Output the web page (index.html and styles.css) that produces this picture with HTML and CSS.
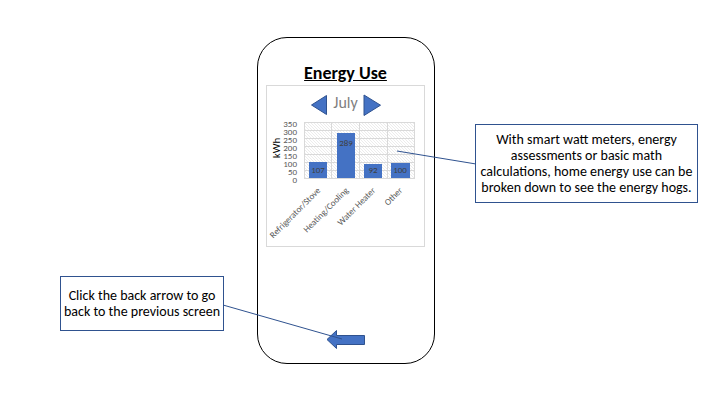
FILE: index.html
```html
<!DOCTYPE html>
<html lang="en">
<head>
<meta charset="utf-8">
<title>Energy Use</title>
<link rel="stylesheet" href="styles.css">
</head>
<body>
<main class="board">
  <aside class="callout callout-back">
    <p>Click the back arrow to go<br>back to the previous screen</p>
    <svg class="link link-back" viewBox="0 0 120 36" aria-hidden="true"><path d="M0 1L119 35"/></svg>
  </aside>

  <section class="phone">
    <h1 class="title">Energy Use</h1>
    <div class="card">
      <div class="month">
        <button class="step" type="button" aria-label="Previous month">
          <svg width="18" height="22" viewBox="0 0 18 22"><path d="M1.5 11L16.5 1.5V20.5Z"/></svg>
        </button>
        <h2 class="name">July</h2>
        <button class="step" type="button" aria-label="Next month">
          <svg width="18" height="22" viewBox="0 0 18 22"><path d="M1 1V21.500L17.500 11.200Z"/></svg>
        </button>
      </div>
      <svg class="chart" viewBox="0 0 157 128" role="img" aria-label="Energy use in kWh by appliance">
        <defs>
          <pattern id="hatch" width="3" height="3" patternUnits="userSpaceOnUse">
            <path class="hatch" d="M-1 -1L4 4M-1 2L1 4M2 -1L4 1"/>
          </pattern>
        </defs>
        <rect x="37" y="4" width="111" height="56" fill="url(#hatch)"/>
        <path class="grid" d="M37 4.500H148M37 12.500H148M37 20.500H148M37 28.500H148M37 36.500H148M37 44.500H148M37 52.500H148M37 60.500H148M37.500 4V61M64.500 4V61M92.500 4V61M120.500 4V61M147.500 4V61"/>
        <g class="bars">
          <rect x="42" y="44" width="18" height="16"/>
          <rect x="70" y="15" width="18" height="45"/>
          <rect x="97" y="46" width="18" height="14"/>
          <rect x="124" y="45" width="19" height="15"/>
        </g>
        <g class="values">
          <text x="51" y="55">107</text>
          <text x="79" y="28">289</text>
          <text x="106" y="55">92</text>
          <text x="133" y="55">100</text>
        </g>
        <g class="ticks">
          <text x="30" y="9">350</text>
          <text x="30" y="17">300</text>
          <text x="30" y="25">250</text>
          <text x="30" y="33">200</text>
          <text x="30" y="41">150</text>
          <text x="30" y="49">100</text>
          <text x="30" y="57">50</text>
          <text x="30" y="65">0</text>
        </g>
        <text class="unit" transform="translate(13 30) rotate(-90)">kWh</text>
        <g class="names">
          <text transform="translate(54 73) rotate(-45)">Refrigerator/Stove</text>
          <text transform="translate(82 73) rotate(-45)">Heating/Cooling</text>
          <text transform="translate(109 73) rotate(-45)">Water Heater</text>
          <text transform="translate(136 73) rotate(-45)">Other</text>
        </g>
      </svg>
    </div>
    <button class="back" type="button" aria-label="Back">
      <svg width="40" height="22" viewBox="0 0 40 22"><path d="M1 10.500L10.500 1.500V6.500H38.500V15.500H10.500V19.500Z"/></svg>
    </button>
  </section>

  <aside class="callout callout-info">
    <p>With smart watt meters, energy<br>assessments or basic math<br>calculations, home energy use can be<br>broken down to see the energy hogs.</p>
    <svg class="link link-info" viewBox="0 0 80 16" aria-hidden="true"><path d="M1 1L80 14"/></svg>
  </aside>
</main>
</body>
</html>
```
FILE: styles.css
```css
* {
  box-sizing: border-box;
}

body {
  margin: 0;
  background: #fff;
  color: #000;
  font-family: Carlito, Lato, "Open Sans", sans-serif;
}

h1,
h2,
p {
  margin: 0;
}

button {
  display: block;
  padding: 0;
  border: 0;
  background: none;
}

button svg {
  display: block;
  fill: #4472c4;
  stroke: #2f528f;
}

.board {
  display: grid;
  grid-template-columns: 164fr 33fr 178fr 40fr 223fr;
  align-items: start;
  padding: 37px 22px 41px 60px;
}

.callout {
  position: relative;
  display: flex;
  align-items: center;
  justify-content: center;
  border: 1px solid #2f528f;
  background: #fff;
  font-size: 14px;
  line-height: 16px;
  text-align: center;
  white-space: nowrap;
}

.callout-back {
  grid-column: 1;
  min-height: 55px;
  margin-top: 239px;
}

.callout-info {
  grid-column: 5;
  min-height: 79px;
  margin-top: 87px;
}

.link {
  position: absolute;
  fill: none;
  stroke: #2f528f;
}

.link-back {
  top: 27px;
  left: 100%;
  width: 120px;
}

.link-info {
  top: 25px;
  right: 100%;
  width: 80px;
}

.phone {
  grid-column: 3;
  display: flex;
  flex-direction: column;
  min-height: 327px;
  padding: 24px 9px 12px 8px;
  border: 1px solid #000;
  border-radius: 30px;
}

.title {
  font-size: 18px;
  line-height: 23px;
  text-align: center;
  text-decoration: underline;
}

.card {
  border: 1px solid #d9d9d9;
}

.month {
  display: flex;
  align-items: center;
  justify-content: center;
  gap: 5px;
  height: 32px;
  padding-top: 6px;
}

.name {
  padding-bottom: 4px;
  color: #7f7f7f;
  font-size: 16px;
  font-weight: 400;
  line-height: 18px;
}

.chart {
  display: block;
  width: 100%;
}

.hatch {
  fill: none;
  stroke: #ececec;
}

.grid {
  fill: none;
  stroke: #d9d9d9;
}

.bars {
  fill: #4472c4;
}

.values,
.ticks,
.names {
  fill: #595959;
  font-size: 9px;
}

.values {
  fill: #404040;
  text-anchor: middle;
}

.ticks,
.names {
  text-anchor: end;
}

.unit {
  font-size: 11px;
  text-anchor: middle;
}

.back {
  align-self: center;
  margin-top: auto;
}
```
